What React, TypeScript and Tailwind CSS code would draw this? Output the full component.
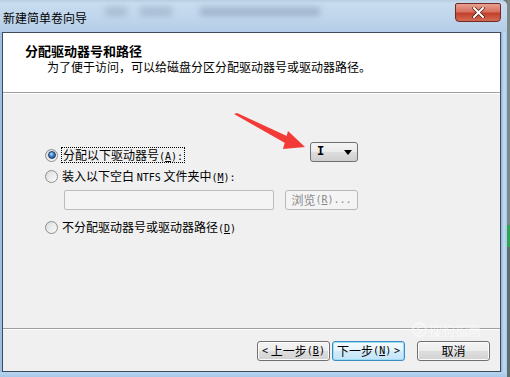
import React from "react";

function Mono({ children }: { children: React.ReactNode }) {
  return <span className="font-['DejaVu_Sans_Mono',monospace] text-[10px] leading-none">{children}</span>;
}

function Mn({ ch }: { ch: string }) {
  return (
    <Mono>
      (<span className="underline underline-offset-1">{ch}</span>)
    </Mono>
  );
}

function Radio({ checked }: { checked?: boolean }) {
  return (
    <div className="w-[13px] h-[13px] rounded-full border border-[#8e8f8f] bg-[linear-gradient(135deg,#d6d6d6,#fbfbfb)] flex items-center justify-center shrink-0">
      {checked ? (
        <div className="w-[8px] h-[8px] rounded-full bg-[radial-gradient(circle_at_40%_35%,#b8e0ff_0%,#3d7fc4_45%,#163d72_100%)] border border-[#1d3f6a]" />
      ) : (
        <div className="w-[9px] h-[9px] rounded-full bg-[linear-gradient(135deg,#e2e2e2,#f7f7f7)]" />
      )}
    </div>
  );
}

function Btn({ children, focused }: { children: React.ReactNode; focused?: boolean }) {
  return (
    <div
      className={
        "w-[73px] h-[20px] rounded-[3px] border flex items-center justify-center text-[12px] leading-none " +
        (focused
          ? "border-[#3c8dc4] bg-[linear-gradient(#f3fafe_0%,#e3f4fc_50%,#d2ecfa_51%,#c3e5f8_100%)] shadow-[inset_0_0_0_1px_#9ddcf7]"
          : "border-[#707070] bg-[linear-gradient(#f4f4f4_0%,#ececec_50%,#dedede_51%,#d2d2d2_100%)] shadow-[inset_0_0_0_1px_#fbfbfb]")
      }
    >
      {children}
    </div>
  );
}

export default function App() {
  return (
    <div className="relative w-[510px] h-[377px] overflow-hidden flex bg-[#6e7d78] font-['Noto_Sans_CJK_SC','Noto_Sans',sans-serif] text-black">
      {/* window */}
      <div className="w-[507px] h-full flex flex-col rounded-tr-[6px] bg-[linear-gradient(#c2d8ee,#a9c8e8)]">
        {/* title bar */}
        <div className="relative h-[32px] flex items-center pl-[3px] pr-[6px] bg-[linear-gradient(#b8cde3_0%,#c9dcef_10%,#bfd5ec_60%,#b3cce8_100%)] rounded-tr-[6px]">
          <div className="absolute left-[105px] top-[7px] w-[22px] h-[9px] bg-[#7f93ab] opacity-40 blur-[3px]" />
          <div className="absolute left-[140px] top-[7px] w-[32px] h-[9px] bg-[#7f93ab] opacity-40 blur-[3px]" />
          <div className="absolute left-[200px] top-[7px] w-[120px] h-[9px] bg-[#6f859f] opacity-40 blur-[3px]" />
          <span className="relative text-[12px] leading-none mt-[4px]">新建简单卷向导</span>
          <div className="relative ml-auto mb-[8px] w-[46px] h-[19px] rounded-b-[4px] rounded-t-[2px] border border-[#6f2a24] bg-[linear-gradient(#e8a093_0%,#d8705f_45%,#c2402c_55%,#d36a52_100%)] flex items-center justify-center">
            <svg width="13" height="11" viewBox="0 0 13 11">
              <path d="M2 1 L11 10 M11 1 L2 10" stroke="#4a1a14" strokeWidth="3.4" strokeLinecap="round" />
              <path d="M2 1 L11 10 M11 1 L2 10" stroke="#ffffff" strokeWidth="2" strokeLinecap="round" />
            </svg>
          </div>
        </div>

        <div className="flex flex-1">
          <div className="w-[2px] bg-[#9dbfe2]" />
          {/* content */}
          <div className="w-[499px] flex flex-col border border-[#3d4b5c] bg-[#f0f0f0]">
            {/* header */}
            <div className="h-[59px] bg-white pt-[10px] flex flex-col">
              <div className="pl-[22px] text-[13px] leading-[16px] font-bold">分配驱动器号和路径</div>
              <div className="pl-[44px] text-[12px] leading-[16px]">为了便于访问，可以给磁盘分区分配驱动器号或驱动器路径。</div>
            </div>
            <div className="h-[1px] bg-[#a0a0a0]" />
            <div className="h-[1px] bg-white" />
            {/* body */}
            <div className="flex-1 flex flex-col pt-[48px] pl-[42px] text-[12px] leading-[16px]">
              <div className="flex items-start w-[313px] h-[21px]">
                <div className="flex items-center gap-[3px] mt-[5px]">
                  <Radio checked />
                  <span className="border border-dotted border-black px-[1px] leading-[14px]">
                    分配以下驱动器号<Mn ch="A" /><Mono>:</Mono>
                  </span>
                </div>
                <div className="ml-auto w-[48px] h-[20px] rounded-[3px] border border-[#707070] bg-[linear-gradient(#f4f4f4_0%,#ebebeb_50%,#dddddd_51%,#cfcfcf_100%)] flex items-center pl-[6px] pr-[5px]">
                  <span className="font-['Liberation_Mono',monospace] text-[12px] leading-none font-bold">I</span>
                  <svg className="ml-auto" width="8" height="5" viewBox="0 0 8 5">
                    <path d="M0 0 H8 L4 5 Z" fill="#000" />
                  </svg>
                </div>
              </div>
              <div className="flex items-center gap-[4px] mt-[5px] h-[16px]">
                <Radio />
                <span>
                  装入以下空白 <Mono>NTFS</Mono> 文件夹中<Mn ch="M" />
                  <Mono>:</Mono>
                </span>
              </div>
              <div className="flex mt-[6px] ml-[19px]">
                <div className="w-[210px] h-[20px] rounded-[2px] border border-[#bcbcbc] bg-[#f4f4f4]" />
                <div className="ml-[11px] w-[73px] h-[20px] rounded-[3px] border border-[#b5b9bd] bg-[#f4f4f4] text-[#8a8a8a] flex items-center justify-center leading-none">
                  浏览<Mn ch="R" /><Mono>...</Mono>
                </div>
              </div>
              <div className="flex items-center gap-[4px] mt-[9px] h-[16px]">
                <Radio />
                <span>
                  不分配驱动器号或驱动器路径<Mn ch="D" />
                </span>
              </div>
            </div>
            <div className="h-[1px] bg-[#a0a0a0]" />
            <div className="h-[1px] bg-white" />
            {/* footer */}
            <div className="h-[41px] flex justify-end items-start pt-[11px] pr-[10px]">
              <Btn>
                <Mono>&lt;</Mono>&nbsp;上一步<Mn ch="B" />
              </Btn>
              <div className="w-[2px]" />
              <Btn focused>
                下一步<Mn ch="N" />&nbsp;<Mono>&gt;</Mono>
              </Btn>
              <div className="w-[12px]" />
              <Btn>取消</Btn>
            </div>
          </div>
          <div className="w-[6px] bg-[linear-gradient(90deg,#8fb3d9,#c3dcf2,#a7c8ea)]" />
        </div>
        <div className="h-[5px] bg-[linear-gradient(#b9d5f0,#a6c7e8)]" />
      </div>
      {/* right background strip */}
      <div className="w-[3px] h-full flex flex-col">
        <div className="h-[225px] bg-[#7b8a86]" />
        <div className="h-[22px] bg-[#2fa84c]" />
        <div className="flex-1 bg-[#5f6e6a]" />
      </div>

      {/* watermark */}
      <div className="absolute left-[412px] top-[322px] flex items-center gap-[2px] text-white opacity-50 text-[13px] leading-none">
        <span className="w-[15px] h-[15px] rounded-full border-2 border-white flex items-center justify-center text-[10px] font-bold">S</span>
        <span>搜狗指南</span>
      </div>

      {/* red arrow */}
      <svg className="absolute left-0 top-0 pointer-events-none" width="510" height="377">
        <polygon points="234,114 237,113 289,137 285,143" fill="#f23a37" />
        <polygon points="288,131 305,147 283,149" fill="#f23a37" />
      </svg>
    </div>
  );
}
